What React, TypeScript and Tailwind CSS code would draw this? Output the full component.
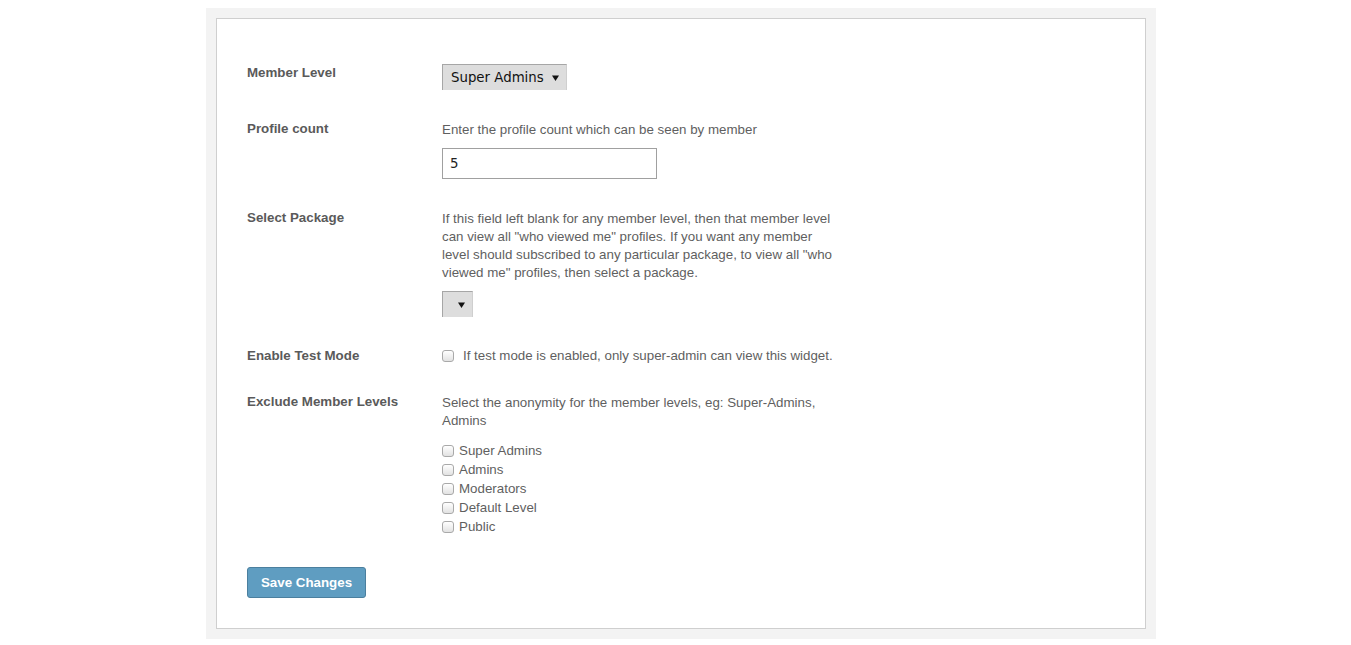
import React from 'react';

const levels = ['Super Admins', 'Admins', 'Moderators', 'Default Level', 'Public'];

const Arrow = () => (
  <svg width="7" height="6" viewBox="0 0 7 6" className="shrink-0">
    <path d="M0 0.5 H7 L3.5 6 Z" fill="#111" />
  </svg>
);

const Box = () => (
  <span className="inline-block w-[12px] h-[12px] shrink-0 rounded-[3px] border border-[#a9a9a9] bg-gradient-to-b from-[#ffffff] to-[#e2e2e2]" />
);

const App: React.FC = () => {
  return (
    <div className="min-h-screen bg-white pt-[8px] pl-[11px] font-['Liberation_Sans',Arial,sans-serif] text-[13.33px]">
      <div className="mx-auto w-[950px] bg-[#f3f3f3] p-[10px]">
        <div className="bg-white border border-[#cfcfcf] pt-[45px] pb-[30px] px-[30px]">
          {/* Member Level */}
          <div className="flex">
            <div className="w-[195px] leading-[18px] font-bold text-[#5a5a5a]">Member Level</div>
            <div className="flex items-center justify-between w-[125px] h-[26px] pl-[8px] pr-[7px] bg-[#dddddd] border-t border-l border-[#a6a6a6] border-r border-r-[#cfcfcf] font-['DejaVu_Sans',sans-serif] text-[13.33px] text-[#111]">
              <span>Super Admins</span>
              <Arrow />
            </div>
          </div>

          {/* Profile count */}
          <div className="flex mt-[30px]">
            <div className="w-[195px] leading-[18px] font-bold text-[#5a5a5a]">Profile count</div>
            <div>
              <div className="leading-[18px] mt-[1px] text-[#5f5f5f]">Enter the profile count which can be seen by member</div>
              <div className="mt-[9px] w-[215px] h-[31px] border border-[#a0a0a0] flex items-center pl-[7px] font-['DejaVu_Sans',sans-serif] text-[13.33px] text-[#222]">
                5
              </div>
            </div>
          </div>

          {/* Select Package */}
          <div className="flex mt-[30px]">
            <div className="w-[195px] leading-[18px] font-bold text-[#5a5a5a]">Select Package</div>
            <div>
              <p className="w-[395px] leading-[18px] mt-[1px] text-[#5f5f5f]">
                If this field left blank for any member level, then that member level can view all "who viewed me" profiles. If you want any member level should subscribed to any particular package, to view all "who viewed me" profiles, then select a package.
              </p>
              <div className="mt-[9px] flex items-center justify-end w-[31px] h-[26px] pr-[7px] bg-[#dddddd] border-t border-l border-[#a6a6a6] border-r border-r-[#cfcfcf]">
                <Arrow />
              </div>
            </div>
          </div>

          {/* Enable Test Mode */}
          <div className="flex mt-[30px]">
            <div className="w-[195px] leading-[18px] font-bold text-[#5a5a5a]">Enable Test Mode</div>
            <div className="flex items-center h-[18px] gap-[9px] text-[#5f5f5f] whitespace-nowrap">
              <Box />
              <span>If test mode is enabled, only super-admin can view this widget.</span>
            </div>
          </div>

          {/* Exclude Member Levels */}
          <div className="flex mt-[28px]">
            <div className="w-[195px] leading-[18px] font-bold text-[#5a5a5a]">Exclude Member Levels</div>
            <div>
              <p className="w-[395px] leading-[18px] mt-[1px] text-[#5f5f5f]">
                Select the anonymity for the member levels, eg: Super-Admins, Admins
              </p>
              <div className="mt-[11px] flex flex-col">
                {levels.map((l) => (
                  <label key={l} className="flex items-center h-[19px] gap-[5px] text-[#5f5f5f]">
                    <Box />
                    <span>{l}</span>
                  </label>
                ))}
              </div>
            </div>
          </div>

          <button className="mt-[31px] w-[119px] h-[31px] rounded-[3px] bg-[#5f9dc1] border border-[#4b7f9e] text-white font-bold text-[13.33px]">
            Save Changes
          </button>
        </div>
      </div>
    </div>
  );
};

export default App;
